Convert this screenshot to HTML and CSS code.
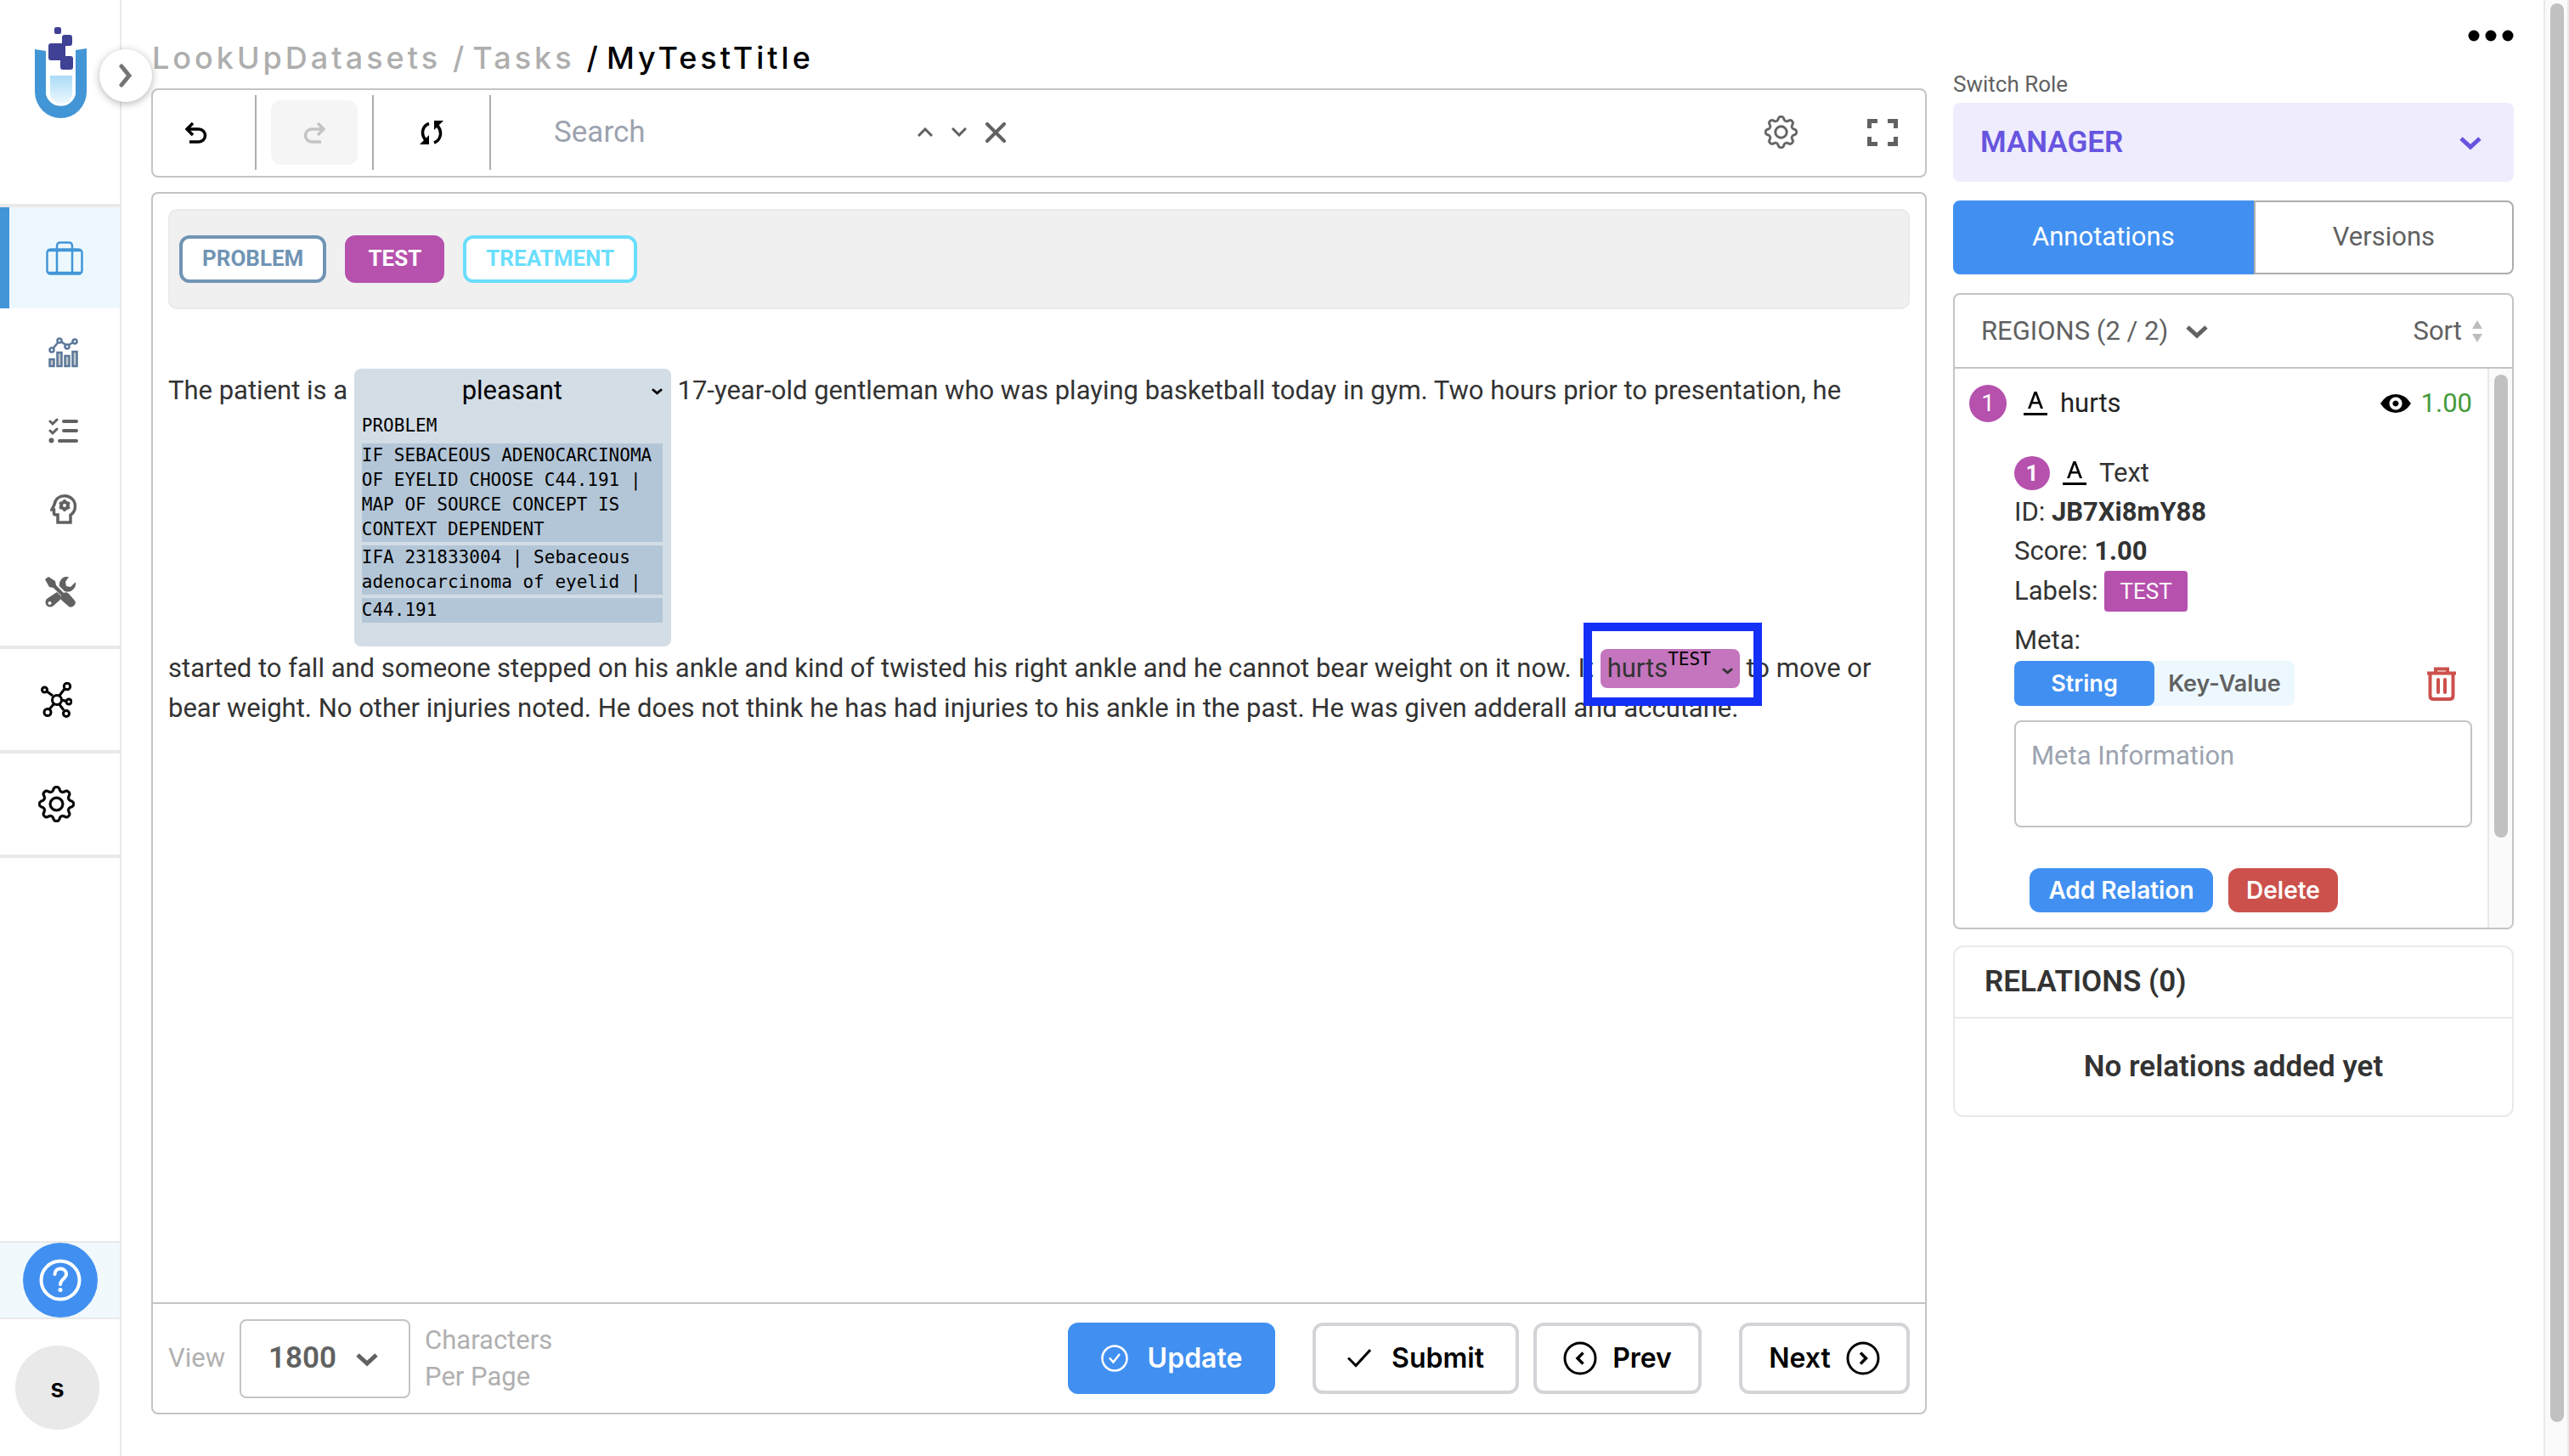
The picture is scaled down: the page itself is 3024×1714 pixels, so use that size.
FILE: index.html
```html
<!DOCTYPE html>
<html lang="en">
<head>
<meta charset="utf-8">
<title>MyTestTitle</title>
<link rel="stylesheet" href="styles.css">
</head>
<body>
<svg class="sprite" aria-hidden="true">
  <symbol id="gear" viewBox="0 0 16 16"><path d="M8 4.754a3.246 3.246 0 1 0 0 6.492 3.246 3.246 0 0 0 0-6.492zM5.754 8a2.246 2.246 0 1 1 4.492 0 2.246 2.246 0 0 1-4.492 0z"/><path d="M9.796 1.343c-.527-1.79-3.065-1.79-3.592 0l-.094.319a.873.873 0 0 1-1.255.52l-.292-.16c-1.64-.892-3.433.902-2.54 2.541l.159.292a.873.873 0 0 1-.52 1.255l-.319.094c-1.79.527-1.79 3.065 0 3.592l.319.094a.873.873 0 0 1 .52 1.255l-.16.292c-.892 1.64.901 3.434 2.541 2.54l.292-.159a.873.873 0 0 1 1.255.52l.094.319c.527 1.79 3.065 1.79 3.592 0l.094-.319a.873.873 0 0 1 1.255-.52l.292.16c1.64.893 3.434-.902 2.54-2.541l-.159-.292a.873.873 0 0 1 .52-1.255l.319-.094c1.79-.527 1.79-3.065 0-3.592l-.319-.094a.873.873 0 0 1-.52-1.255l.16-.292c.893-1.64-.902-3.433-2.541-2.54l-.292.159a.873.873 0 0 1-1.255-.52l-.094-.319zm-2.633.283c.246-.835 1.428-.835 1.674 0l.094.319a1.873 1.873 0 0 0 2.693 1.115l.291-.16c.764-.415 1.6.42 1.184 1.185l-.159.292a1.873 1.873 0 0 0 1.116 2.692l.318.094c.835.246.835 1.428 0 1.674l-.319.094a1.873 1.873 0 0 0-1.115 2.693l.16.291c.415.764-.42 1.6-1.185 1.184l-.291-.159a1.873 1.873 0 0 0-2.693 1.116l-.094.318c-.246.835-1.428.835-1.674 0l-.094-.319a1.873 1.873 0 0 0-2.692-1.115l-.292.16c-.764.415-1.6-.42-1.184-1.185l.159-.291A1.873 1.873 0 0 0 1.945 8.93l-.319-.094c-.835-.246-.835-1.428 0-1.674l.319-.094A1.873 1.873 0 0 0 3.06 4.377l-.16-.292c-.415-.764.42-1.6 1.185-1.184l.292.159a1.873 1.873 0 0 0 2.692-1.115l.094-.319z"/></symbol>
  <symbol id="chevron" viewBox="0 0 28 18"><path d="M3 4l11 10L25 4" fill="none" stroke="currentColor" stroke-width="5"/></symbol>
  <symbol id="undo" viewBox="0 0 26 26"><path d="M5 24h11a7.500 7.500 0 0 0 0-15H3M9 2L2 9l7 7" fill="none" stroke="currentColor" stroke-width="3.500"/></symbol>
  <symbol id="text-mark" viewBox="0 0 28 28"><path d="M0 25h28v3H0zM5 20L12.500 0h3L23 20h-3l-2-5.500h-8L8 20zM11 12h6l-3-8.500z"/></symbol>
  <symbol id="caret" viewBox="0 0 14 8"><path d="M1 1l6 5 6-5" fill="none" stroke="currentColor" stroke-width="3"/></symbol>
</svg>

<aside class="sidebar">
  <a class="logo" href="#" aria-label="Home">
    <svg width="62" height="108" viewBox="0 0 62 108">
      <defs><linearGradient id="liquid" x1="0" y1="0" x2="0" y2="1"><stop offset="0" stop-color="#a9dbf6"/><stop offset="1" stop-color="#eef8fe"/></linearGradient></defs>
      <path d="M0 26l13 2v51a18 18 0 0 0 35 0V27l13-2v51a30.500 31 0 0 1-61 0z" fill="#4296d5"/>
      <path d="M18 57h26v20a13 13 0 0 1-26 0z" fill="url(#liquid)"/>
      <g fill="#3f4194"><rect x="23" y="0" width="8" height="8" rx="2"/><rect x="32" y="9" width="12" height="13" rx="3"/><rect x="16" y="19" width="20" height="20" rx="3"/><rect x="30" y="34" width="15" height="16" rx="3"/></g>
    </svg>
  </a>
  <button class="expand" aria-label="Expand menu"><svg width="16" height="28" viewBox="0 0 16 28"><path d="M3 3l9 11-9 11" fill="none" stroke="#757575" stroke-width="5" stroke-linecap="round"/></svg></button>
  <nav class="nav">
    <a class="nav-active" href="#" aria-label="Projects"><svg width="44" height="40" viewBox="0 0 44 40" fill="none" stroke="#4296d8" stroke-width="2.500"><rect x="1.500" y="9.500" width="41" height="29" rx="4"/><path d="M13 38V6q0-4.500 4-4.500h10q4 0 4 4.500v32M2 11h40M2 37h40"/></svg></a>
    <div class="nav-group">
      <a href="#" aria-label="Analytics"><svg width="35" height="36" viewBox="0 0 35 36" fill="#c4c8cd" stroke="#5b7899" stroke-width="2.500"><path d="M1.500 26h5v8h-5zM10.500 18h5v16h-5zM19.500 22h5v12h-5zM28.500 17h5v17h-5z"/><path d="M4 15l9-11 9 6 9-5" fill="none"/><g fill="#fff"><circle cx="4" cy="15" r="2.500"/><circle cx="13" cy="4" r="2.500"/><circle cx="22" cy="11" r="2.500"/><circle cx="31" cy="5" r="2.500"/></g></svg></a>
      <a href="#" aria-label="Tasks"><svg width="35" height="30" viewBox="0 0 35 30" fill="none" stroke="#616161" stroke-width="4" stroke-linecap="round"><path d="M18 4h15M18 15h15M13 27h20"/><path d="M2 4l3 3 5-5M2 15l3 3 5-5" stroke-width="3"/><circle cx="3.500" cy="26.500" r="3" fill="#616161" stroke="none"/></svg></a>
      <a href="#" aria-label="Models"><svg width="31" height="35" viewBox="0 0 31 35"><path d="M9 33V24H6.500q-2 0-2-2v-4H2l3-6C6 5 11 1.800 17 1.800c7 0 12.500 5 12.500 12 0 4.500-2.500 8.500-5.500 10.500V33z" fill="none" stroke="#616161" stroke-width="3.500"/><circle cx="17" cy="13" r="4" fill="none" stroke="#616161" stroke-width="4"/><path d="M17 6v3M17 17v3M11 9.500l2.500 1.500M20.500 15l2.500 1.500M11 16.500l2.500-1.500M20.500 11l2.500-1.500" stroke="#616161" stroke-width="3"/></svg></a>
      <a class="tools" href="#" aria-label="Tools"><svg width="36" height="36" viewBox="0 0 36 36" fill="#616161"><path d="M0 3l4-3 8 5 1 5 9 9q3-2 6 1l7 8q2 3-1 6-3 3-6 1l-8-7q-3-3-1-6l-9-9-5-1z"/><path d="M28 0q-6-1-9 3-3 4-2 8l6 6q5 2 9-1 5-4 4-10l-6 6-5-1-1-5zM14 18l5 5q-1 2 0 3l-9 8q-4 3-8 0-3-4 0-8zM5.500 29a2 2 0 1 0 .1 0z" fill-rule="evenodd"/></svg></a>
    </div>
    <a class="nav-block" href="#" aria-label="Hub"><svg width="37" height="42" viewBox="0 0 37 42" fill="none" stroke="#000" stroke-width="3"><path d="M6 10l8 6M28 8l-7 9M25 21l5 1.500M21 25l6 8M16 25l-6 7"/><circle cx="19" cy="21" r="5.500"/><circle cx="4.500" cy="9" r="3"/><circle cx="31" cy="5" r="3.700"/><circle cx="33" cy="23" r="3"/><circle cx="30" cy="37" r="3.500"/><circle cx="8" cy="35.500" r="4"/></svg></a>
    <a class="nav-block" href="#" aria-label="Settings"><svg class="bold-gear" width="43" height="43"><use href="#gear"/></svg></a>
  </nav>
  <div class="help"><button aria-label="Help"><svg width="50" height="50" viewBox="0 0 50 50" fill="none" stroke="#fff" stroke-width="4" stroke-linecap="round"><circle cx="25" cy="25" r="22.500"/><path d="M18.500 18c0-9 13.500-8.500 13.500 0 0 5-7 6-7 12"/><circle cx="25" cy="36.500" r="2.500" fill="#fff" stroke="none"/></svg></button></div>
  <button class="avatar">s</button>
</aside>

<main class="page">
  <section class="editor">
    <nav class="crumbs"><a href="#">LookUpDatasets</a><span>/</span><a href="#">Tasks</a><b>/</b><b>MyTestTitle</b></nav>

    <div class="toolbar">
      <div class="cell first"><button aria-label="Undo"><svg width="26" height="26"><use href="#undo"/></svg></button></div>
      <div class="cell"><button class="off" aria-label="Redo" disabled><svg class="flip" width="26" height="26"><use href="#undo"/></svg></button></div>
      <div class="cell"><button aria-label="Reset"><svg width="28" height="28" viewBox="0 0 28 28" fill="none" stroke="#000" stroke-width="3.500"><path d="M11 3.500C3 6 1 16 7 23M17 26c8-3 10-13 4-20"/><path d="M0 28h11V17zM28 0H17v11z" fill="#000" stroke="none"/></svg></button></div>
      <input class="search" type="text" placeholder="Search" aria-label="Search">
      <div class="search-nav">
        <button aria-label="Previous match"><svg class="up" width="18" height="11" viewBox="0 0 18 11"><path d="M1 1l8 8 8-8" fill="none" stroke="#616161" stroke-width="3"/></svg></button>
        <button aria-label="Next match"><svg width="18" height="11" viewBox="0 0 18 11"><path d="M1 1l8 8 8-8" fill="none" stroke="#616161" stroke-width="3"/></svg></button>
        <button aria-label="Clear search"><svg width="24" height="24" viewBox="0 0 24 24"><path d="M2 2l20 20M22 2L2 22" stroke="#616161" stroke-width="4" stroke-linecap="round"/></svg></button>
      </div>
      <div class="tools-right">
        <button aria-label="Editor settings"><svg class="bold-gear" width="39" height="39"><use href="#gear"/></svg></button>
        <button aria-label="Full screen"><svg width="36" height="32" viewBox="0 0 36 32" fill="none" stroke="#616161" stroke-width="5"><path d="M12 2.500H2.500V11M24 2.500h9.500V11M12 29.500H2.500V21M24 29.500h9.500V21"/></svg></button>
      </div>
    </div>

    <div class="content">
      <div class="labels">
        <button class="label problem">PROBLEM</button>
        <button class="label test">TEST</button>
        <button class="label treatment">TREATMENT</button>
      </div>
      <p class="note">The patient is a <span class="entity"><span class="entity-head">pleasant<svg class="caret" width="13" height="8"><use href="#caret"/></svg></span><span class="entity-label">PROBLEM</span><span class="code">IF SEBACEOUS ADENOCARCINOMA OF EYELID CHOOSE C44.191 | MAP OF SOURCE CONCEPT IS CONTEXT DEPENDENT</span><span class="code">IFA 231833004 | Sebaceous adenocarcinoma of eyelid |</span><span class="code">C44.191</span></span> 17-year-old gentleman who was playing basketball today in gym. Two hours prior to presentation, he started to fall and someone stepped on his ankle and kind of twisted his right ankle and he cannot bear weight on it now. It <span class="chip">hurts<span class="chip-tag">TEST</span><svg width="13" height="8"><use href="#caret"/></svg><span class="marker"></span></span> to move or bear weight. No other injuries noted. He does not think he has had injuries to his ankle in the past. He was given adderall and accutane.</p>
    </div>

    <footer class="pager">
      <label for="chars">View</label>
      <div class="pick"><select id="chars"><option>1800</option></select><svg width="28" height="18"><use href="#chevron"/></svg></div>
      <span class="unit">Characters<br>Per Page</span>
      <div class="actions">
        <button class="btn primary"><svg width="32" height="32" viewBox="0 0 32 32" fill="none" stroke="#fff" stroke-width="2.500"><circle cx="16" cy="16" r="14.500"/><path d="M10 15.500l4.500 5L22 11"/></svg>Update</button>
        <button class="btn submit"><svg width="28" height="22" viewBox="0 0 28 22" fill="none" stroke="#000" stroke-width="3"><path d="M1 10.500l9 9L27 1"/></svg>Submit</button>
        <button class="btn prev"><svg width="40" height="40" viewBox="0 0 40 40" fill="none" stroke="#000" stroke-width="3"><circle cx="20" cy="20" r="18"/><path d="M23.500 13.500L17 20l6.500 6.500" stroke-width="3.500"/></svg>Prev</button>
        <button class="btn next">Next<svg width="40" height="40" viewBox="0 0 40 40" fill="none" stroke="#000" stroke-width="3"><circle cx="20" cy="20" r="18"/><path d="M17 13.500l6.500 6.500-6.500 6.500" stroke-width="3.500"/></svg></button>
      </div>
    </footer>
  </section>

  <section class="side">
    <button class="more" aria-label="More"><svg width="54" height="14" viewBox="0 0 54 14"><circle cx="7" cy="7" r="6.500"/><circle cx="27" cy="7" r="6.500"/><circle cx="47" cy="7" r="6.500"/></svg></button>
    <label class="role-label" for="role">Switch Role</label>
    <div class="role"><select id="role"><option>MANAGER</option></select><svg width="28" height="18"><use href="#chevron"/></svg></div>
    <div class="tabs"><button class="on">Annotations</button><button>Versions</button></div>

    <div class="regions">
      <div class="regions-head">
        <button>REGIONS (2 / 2)<svg width="28" height="18"><use href="#chevron"/></svg></button>
        <button class="sort">Sort<svg width="14" height="26" viewBox="0 0 14 26" fill="#bdbdbd"><path d="M7 0l6 10H1zM7 26l6-10H1z"/></svg></button>
      </div>
      <div class="regions-body">
        <div class="regions-list">
          <div class="region">
            <span class="num">1</span><svg class="mark" width="28" height="28"><use href="#text-mark"/></svg><span>hurts</span>
            <svg class="eye" width="36" height="22" viewBox="0 0 36 22"><path d="M0 11Q7 0 18 0t18 11Q29 22 18 22T0 11zM18 3.500a7.500 7.500 0 1 0 .1 0zM18 7.500a3.500 3.500 0 1 1-.1 0z" fill-rule="evenodd"/></svg><span class="score">1.00</span>
          </div>
          <div class="detail">
            <div class="kind"><span class="num small">1</span><svg width="28" height="28"><use href="#text-mark"/></svg><span>Text</span></div>
            <div>ID: <b>JB7Xi8mY88</b></div>
            <div>Score: <b>1.00</b></div>
            <div class="tags">Labels: <span class="tag">TEST</span></div>
            <label class="meta-label" for="meta">Meta:</label>
            <div class="meta-row">
              <div class="switch"><button class="on">String</button><button>Key-Value</button></div>
              <button class="trash" aria-label="Delete meta"><svg width="34" height="40" viewBox="0 0 34 40" fill="none" stroke="#cc514c" stroke-width="4"><path d="M0 7.500h34M10 7V2.500h14V7"/><path d="M3.500 8v26q0 4 4 4h19q4 0 4-4V8" /><path d="M13 15v15M21 15v15" stroke-linecap="round"/></svg></button>
            </div>
            <textarea id="meta" placeholder="Meta Information"></textarea>
            <div class="detail-actions"><button class="add">Add Relation</button><button class="del">Delete</button></div>
          </div>
        </div>
        <div class="track"><div class="thumb"></div></div>
      </div>
    </div>

    <div class="relations"><h2>RELATIONS (0)</h2><p>No relations added yet</p></div>
  </section>
</main>
<div class="page-track"><div class="page-thumb"></div></div>
</body>
</html>
```
FILE: styles.css
```css
* { box-sizing: border-box; }
body { margin: 0; min-height: 100vh; display: flex; background: #fff; color: #333; font: 31px/46px Roboto, "Liberation Sans", sans-serif; }
button { border: 0; padding: 0; background: none; color: inherit; font: inherit; display: flex; align-items: center; justify-content: center; flex: none; }
a { color: inherit; text-decoration: none; }
svg { display: block; flex: none; }
select { appearance: none; border: 0; background: none; font: inherit; color: inherit; width: 100%; height: 100%; }
::placeholder { color: #9ca3af; opacity: 1; }
.sprite { position: absolute; width: 0; height: 0; }

/* sidebar */
.sidebar { position: relative; flex: none; width: 143px; border-right: 2px solid #e9e9e9; display: flex; flex-direction: column; }
.logo { height: 240px; padding: 32px 0 0 41px; }
.expand { position: absolute; left: 117px; top: 58px; width: 62px; height: 62px; border-radius: 50%; background: #fff; box-shadow: 0 2px 10px rgba(0, 0, 0, .3); }
.nav { display: flex; flex-direction: column; border-top: 4px solid #e9e9e9; }
.nav a { display: flex; align-items: center; justify-content: center; }
.nav-active { height: 119px; background: #edf8fe; border-left: 11px solid #4296d8; }
.nav-group { padding: 6px 0 12px; border-bottom: 4px solid #e9e9e9; }
.nav-group a { height: 92px; padding-left: 8px; }
.nav-group .tools { height: 103px; padding: 0; }
.nav-block { height: 123px; padding-right: 8px; border-bottom: 4px solid #e9e9e9; }
.bold-gear { overflow: visible; stroke: #000; stroke-width: .2; }
.tools-right .bold-gear { fill: #616161; stroke: #616161; }
.help { margin-top: auto; padding-left: 27px; border: solid #e9e9e9; border-width: 2px 0; background: #f1f9fd; }
.help button { width: 88px; height: 88px; border-radius: 50%; background: #4190f1; }
.avatar { width: 99px; height: 99px; margin: 31px 0 31px 18px; border-radius: 50%; background: #e9e9e9; color: #000; font: 600 30px/40px Inter, sans-serif; }

/* page */
.page { flex: 1; min-width: 0; display: flex; gap: 31px; padding: 0 35px 49px 35px; }
.editor { flex: 1; min-width: 0; display: flex; flex-direction: column; }
.crumbs { height: 104px; padding: 47px 0 0 1px; display: flex; font: 500 36px/42px Inter, sans-serif; letter-spacing: 4px; color: #aeaeae; }
.crumbs span, .crumbs b { margin-left: 14px; font-weight: 500; }
.crumbs b { color: #000; }
.crumbs span + a, .crumbs b + b { margin-left: 6px; }

.toolbar { height: 105px; margin-bottom: 17px; padding-bottom: 2px; border: 2px solid #c4c4c4; border-radius: 8px; display: flex; align-items: center; }
.cell { width: 138px; height: 88px; border-right: 2px solid #adadad; display: flex; align-items: center; justify-content: center; color: #000; }
.cell.first { width: 122px; padding-right: 18px; }
.cell button { width: 102px; height: 76px; border-radius: 12px; }
.cell .off { background: #f5f5f5; color: #c4c4c4; }
.flip { transform: scaleX(-1); }
.up { transform: rotate(180deg); }
.search { width: 480px; height: 80px; margin-left: 58px; padding: 0 16px; border: 0; font: 35px/40px Roboto, sans-serif; }
.search-nav { display: flex; align-items: center; gap: 22px; margin-left: -36px; }
.tools-right { margin-left: auto; display: flex; align-items: center; gap: 82px; padding-right: 32px; }

.content { flex: 1; padding: 18px; border: 2px solid #c4c4c4; border-bottom: 0; border-radius: 8px 8px 0 0; }
.labels { height: 118px; padding: 0 11px; border: 2px solid #eaeaea; border-radius: 10px; background: #f0f0f0; display: flex; align-items: center; gap: 22px; }
.label { height: 56px; padding: 0 23px 2px; border: 4px solid; border-radius: 12px; background: #fff; font: 700 26px/30px Roboto, sans-serif; }
.problem { color: #7094b4; }
.test { background: #b651ad; border-color: #b651ad; color: #fff; }
.treatment { color: #6adefc; }

.note { margin: 70px 0 0; line-height: 47px; }
.entity { display: inline-flex; flex-direction: column; gap: 4px; width: 373px; margin-bottom: 2px; padding: 3px 10px 28px 9px; border-radius: 8px; background: #d3dde6; color: #000; font: 21px/29px "DejaVu Sans Mono", monospace; }
.entity-head { display: flex; align-items: center; justify-content: center; position: relative; height: 46px; font: 31px/48px Roboto, sans-serif; }
.caret { position: absolute; right: 0; top: 20px; }
.entity-label { margin-bottom: 2px; }
.code { background: #b3c6d7; }
.chip { position: relative; display: inline-flex; align-items: baseline; height: 46px; line-height: 46px; padding: 0 8px; border-radius: 8px; background: #c475bd; }
.chip-tag { align-self: flex-start; margin-right: 13px; color: #000; font: 21px/24px "DejaVu Sans Mono", monospace; }
.chip svg { align-self: center; margin-top: 6px; }
.marker { position: absolute; inset: -31px -26px -21px -20px; border: 10px solid #1430f6; }

.pager { height: 132px; padding: 0 18px; border: 2px solid #c4c4c4; border-radius: 0 0 8px 8px; display: flex; align-items: center; gap: 17px; color: #b0b0b0; }
.pick { position: relative; width: 201px; height: 93px; border: 2px solid #c4c4c4; border-radius: 8px; font-size: 35px; font-weight: 600; color: #616161; }
.pick select { padding: 0 0 0 32px; }
.pick svg { position: absolute; right: 35px; top: 36px; pointer-events: none; }
.unit { line-height: 43px; }
.actions { margin-left: auto; display: flex; }
.btn { height: 84px; border: 4px solid #d4d4d8; border-radius: 12px; background: #fff; color: #000; font: 600 32px/40px Inter, sans-serif; }
.btn.primary { width: 244px; gap: 23px; margin-right: 44px; border-color: #4190f1; background: #4190f1; color: #fff; }
.submit { width: 243px; gap: 24px; }
.prev { width: 198px; gap: 18px; margin: 0 44px 0 17px; }
.next { width: 201px; gap: 18px; }

/* side panel */
.side { flex: none; width: 660px; display: flex; flex-direction: column; }
.more { height: 84px; align-self: flex-end; }
.role-label { font-size: 26px; line-height: 30px; color: #616161; margin-bottom: 7px; }
.role { position: relative; height: 93px; border-radius: 8px; background: #efecfe; color: #6755df; font-size: 35px; font-weight: 600; }
.role select { padding: 0 32px; }
.role svg { position: absolute; right: 37px; top: 38px; pointer-events: none; }
.tabs { display: flex; height: 87px; margin: 22px 0; }
.tabs button { flex: 306; border: 2px solid #adadad; border-radius: 0 8px 8px 0; padding-bottom: 2px; color: #616161; }
.tabs .on { flex: 354; border-color: #4190f1; border-radius: 8px 0 0 8px; background: #4190f1; color: #fff; }
.regions { border: 2px solid #c4c4c4; border-radius: 8px; overflow: hidden; }
.regions-head { height: 87px; padding: 0 34px 0 31px; border-bottom: 2px solid #c4c4c4; display: flex; justify-content: space-between; color: #616161; }
.regions-head button { gap: 20px; }
.regions-head .sort { gap: 11px; }
.regions-body { display: flex; }
.regions-list { flex: 1; padding: 19px 18px 18px 17px; }
.region { display: flex; align-items: center; height: 44px; color: #222; }
.num { width: 44px; height: 44px; border-radius: 50%; background: #b651ad; color: #fff; font-size: 28px; line-height: 44px; text-align: center; }
.region .mark { margin: 0 15px 0 20px; }
.eye { margin-left: auto; margin-right: 12px; fill: #000; }
.score { color: #459a3c; }
.detail { margin: 37px 0 0 53px; }
.detail b { font-weight: 700; }
.kind { display: flex; align-items: center; gap: 15px; }
.num.small { width: 42px; height: 40px; font-size: 26px; line-height: 40px; font-weight: 700; }
.tags { display: flex; align-items: center; gap: 8px; height: 48px; margin-bottom: 10px; }
.tag { height: 48px; padding: 0 18px; border-radius: 4px; background: #b651ad; color: #fff; font-size: 26px; line-height: 48px; }
.meta-label { display: block; line-height: 48px; }
.meta-row { display: flex; justify-content: space-between; align-items: center; padding-right: 19px; margin-bottom: 17px; }
.switch { display: flex; border-radius: 8px; background: #edf8fe; color: #616161; font: 600 27px/34px Inter, sans-serif; }
.switch button { width: 165px; height: 53px; border-radius: 8px; }
.switch .on { background: #4190f1; color: #fff; }
textarea { display: block; width: 100%; height: 126px; padding: 17px 18px; border: 2px solid #c4c4c4; border-radius: 8px; font: inherit; resize: none; }
.detail-actions { display: flex; gap: 18px; margin: 48px 0 0 18px; color: #fff; font: 600 28px/34px Inter, sans-serif; }
.detail-actions button { height: 52px; border-radius: 12px; }
.detail-actions .add { width: 216px; background: #4190f1; }
.detail-actions .del { width: 129px; background: #cc514c; }
.track { width: 29px; padding: 7px 5px 0 6px; border-left: 2px solid #e8e8e8; background: #fafafa; }
.thumb { height: 545px; border-radius: 8px; background: #c1c1c1; }
.relations { margin-top: 19px; border: 2px solid #e9e9e9; border-radius: 12px; }
.relations h2, .relations p { margin: 0; font-size: 35px; font-weight: 600; }
.relations h2 { height: 84px; padding-left: 35px; border-bottom: 2px solid #e9e9e9; line-height: 82px; }
.relations p { line-height: 114px; text-align: center; }

.page-track { flex: none; width: 30px; padding: 4px 4px 0 6px; border: solid #e8e8e8; border-width: 0 2px; background: #fafafa; }
.page-thumb { height: calc(100% - 40px); border-radius: 8px; background: #c1c1c1; }
```
